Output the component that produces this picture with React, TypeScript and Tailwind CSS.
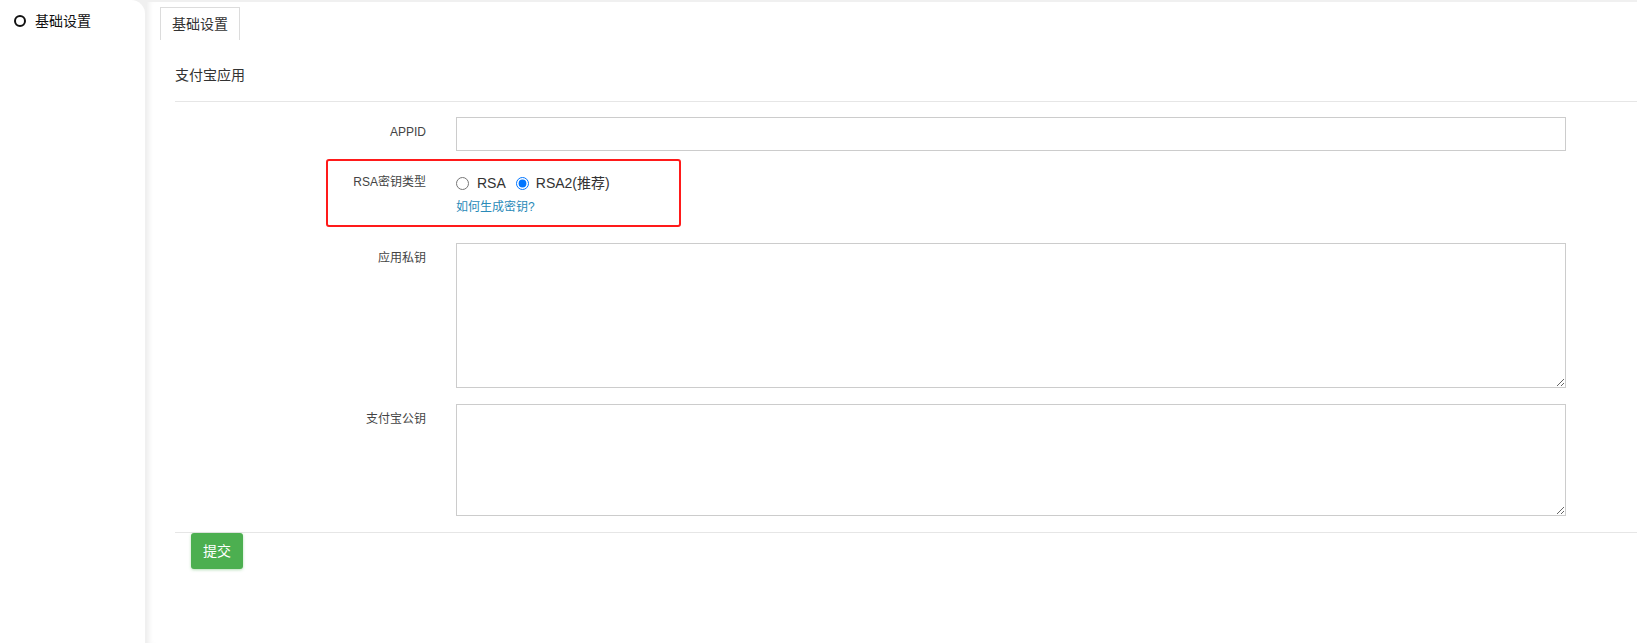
import { useState } from "react";

const FONT = { fontFamily: '"Liberation Sans", "Noto Sans CJK SC", sans-serif' };

function Row({ label, children, className = "" }: { label: string; children: React.ReactNode; className?: string }) {
  return (
    <div className={`flex ${className}`}>
      <div className="w-[251px] shrink-0 pr-0 pt-[6px] text-right text-[12px] leading-[18px] text-[#444]">{label}</div>
      <div className="ml-[30px] w-[1110px]">{children}</div>
    </div>
  );
}

export default function App() {
  const [signType, setSignType] = useState("RSA2");

  return (
    <div className="flex h-[643px] bg-[#f0f0f0]" style={FONT}>
      <aside className="w-[145px] shrink-0 rounded-tr-[14px] bg-white">
        <div className="flex items-center pl-[14px] pt-[12px]">
          <span className="h-[12px] w-[12px] rounded-full border-2 border-[#111]" />
          <span className="ml-[9px] text-[14px] leading-[18px] text-[#111]">基础设置</span>
        </div>
      </aside>

      <main className="mt-[2px] ml-[1px] flex-1 bg-white shadow-[inset_7px_0_6px_-5px_rgba(0,0,0,0.09)]">
        <div className="pl-[14px] pt-[5px]">
          <div className="h-[33px] w-[80px] border border-b-0 border-[#dcdcdc] pt-[7px] text-center text-[14px] leading-[18px] text-[#333]">
            基础设置
          </div>
        </div>

        <div className="ml-[29px]">
          <div className="h-[62px] border-b border-[#e6e6e6] pt-[26px] text-[14px] leading-[18px] text-[#333]">支付宝应用</div>

          <Row label="APPID" className="mt-[15px]">
            <input className="block h-[34px] w-full border border-[#cccccc] px-2 text-[13px] outline-none" />
          </Row>

          <div className="relative">
            <div className="pointer-events-none absolute left-[151px] top-[-8px] h-[68px] w-[355px] rounded-[3px] border-2 border-[#ff1a1a]" />
            <Row label="RSA密钥类型" className="mt-[16px]">
              <div className="flex items-center pt-[6px] text-[14px] leading-[20px] text-[#333]">
                <label className="flex items-center">
                  <input
                    type="radio"
                    name="sign"
                    checked={signType === "RSA"}
                    onChange={() => setSignType("RSA")}
                    className="m-0 h-[13px] w-[13px]"
                  />
                  <span className="ml-[8px]">RSA</span>
                </label>
                <label className="ml-[10px] flex items-center">
                  <input
                    type="radio"
                    name="sign"
                    checked={signType === "RSA2"}
                    onChange={() => setSignType("RSA2")}
                    className="m-0 h-[13px] w-[13px]"
                  />
                  <span className="ml-[7px]">RSA2(推荐)</span>
                </label>
              </div>
              <a className="mt-[5px] block text-[12px] leading-[18px] text-[#2a8ab8]">如何生成密钥?</a>
            </Row>
          </div>

          <Row label="应用私钥" className="mt-[27px]">
            <textarea className="block h-[145px] w-full border border-[#cccccc] p-2 text-[13px] outline-none" />
          </Row>

          <Row label="支付宝公钥" className="mt-[16px]">
            <textarea className="block h-[112px] w-full border border-[#cccccc] p-2 text-[13px] outline-none" />
          </Row>

          <div className="mt-[16px] border-t border-[#e6e6e6]">
            <button className="ml-[16px] h-[36px] w-[52px] rounded-[3px] bg-[#4caf50] text-[14px] text-white shadow-[0_1px_3px_rgba(76,175,80,0.4)]">
              提交
            </button>
          </div>
        </div>
      </main>
    </div>
  );
}
